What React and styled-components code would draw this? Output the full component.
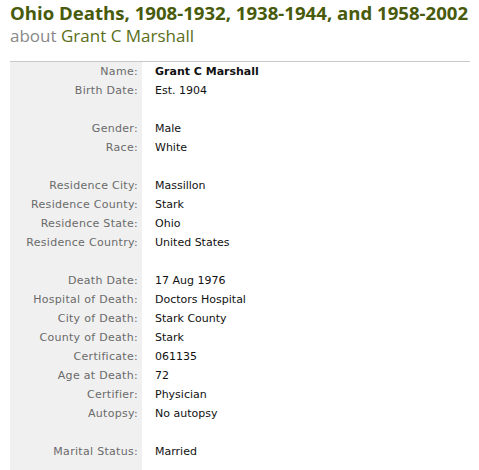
import React from "react";
import styled, { createGlobalStyle } from "styled-components";

const GlobalStyle = createGlobalStyle`
    body {
        margin: 0;
        background: #fff;
    }
`

const Page = styled.div`
    padding: 0 10px;
    width: 479px;
    box-sizing: border-box;
`

const Title = styled.h1`
    margin: 0;
    font-family: "Open Sans", "DejaVu Sans", sans-serif;
    font-size: 18.6px;
    font-weight: bold;
    color: #485a0b;
    line-height: 26px;
    white-space: nowrap;
`

const Subtitle = styled.h2`
    margin: 0;
    font-family: "Open Sans", "DejaVu Sans", sans-serif;
    font-size: 17px;
    font-weight: normal;
    color: #888;
    line-height: 20px;
`

const SubName = styled.span`
    color: #5a6e1a;
`

const Table = styled.div`
    margin-top: 15px;
    width: 460px;
    border-top: 1px solid #c8c8c8;
    display: grid;
    grid-template-columns: 132px 1fr;
    font-family: "DejaVu Sans", Verdana, sans-serif;
    font-size: 11px;
    padding-bottom: 20px;
    background: linear-gradient(to right, #f0f0f0 132px, #fff 132px);
`

const Label = styled.div`
    text-align: right;
    padding-right: 4px;
    color: #6a6a6a;
    letter-spacing: 0.3px;
    height: 19px;
    line-height: 19px;
`

const Value = styled.div`
    padding-left: 13px;
    color: #111;
    height: 19px;
    line-height: 19px;
    font-weight: ${p => (p.$bold ? "bold" : "normal")};
`

const rows = [
    ["Name:", "Grant C Marshall", true],
    ["Birth Date:", "Est. 1904"],
    null,
    ["Gender:", "Male"],
    ["Race:", "White"],
    null,
    ["Residence City:", "Massillon"],
    ["Residence County:", "Stark"],
    ["Residence State:", "Ohio"],
    ["Residence Country:", "United States"],
    null,
    ["Death Date:", "17 Aug 1976"],
    ["Hospital of Death:", "Doctors Hospital"],
    ["City of Death:", "Stark County"],
    ["County of Death:", "Stark"],
    ["Certificate:", "061135"],
    ["Age at Death:", "72"],
    ["Certifier:", "Physician"],
    ["Autopsy:", "No autopsy"],
    null,
    ["Marital Status:", "Married"],
]

const App = () => {
    return (
        <Page>
            <GlobalStyle />
            <Title>Ohio Deaths, 1908-1932, 1938-1944, and 1958-2002</Title>
            <Subtitle>about <SubName>Grant C Marshall</SubName></Subtitle>
            <Table>
                {rows.map((r, i) =>
                    r ? (
                        <React.Fragment key={i}>
                            <Label>{r[0]}</Label>
                            <Value $bold={r[2]}>{r[1]}</Value>
                        </React.Fragment>
                    ) : (
                        <React.Fragment key={i}>
                            <Label />
                            <Value />
                        </React.Fragment>
                    )
                )}
            </Table>
        </Page>
    );
}

export default App;
